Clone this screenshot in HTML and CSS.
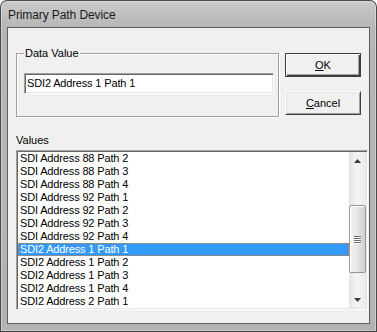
FILE: index.html
```html
<!DOCTYPE html>
<html lang="en">
<head>
    <meta charset="UTF-8">
    <title>Primary Path Device</title>
    <link rel="stylesheet" href="styles.css">
</head>
<body>
    <div class="window">
        <div class="titlebar">Primary Path Device</div>

        <div class="client">
            <div class="top-row">
                <div class="groupbox">
                    <span class="group-label">Data Value</span>
                    <div class="textbox">SDI2 Address 1 Path 1</div>
                </div>
                <div class="buttons">
                    <button class="btn default"><u>O</u>K</button>
                    <button class="btn"><u>C</u>ancel</button>
                </div>
            </div>

            <div class="list-label">Values</div>
            <div class="listbox">
                <ul class="items">
                    <li>SDI Address 88 Path 2</li>
                    <li>SDI Address 88 Path 3</li>
                    <li>SDI Address 88 Path 4</li>
                    <li>SDI Address 92 Path 1</li>
                    <li>SDI Address 92 Path 2</li>
                    <li>SDI Address 92 Path 3</li>
                    <li>SDI Address 92 Path 4</li>
                    <li class="selected">SDI2 Address 1 Path 1</li>
                    <li>SDI2 Address 1 Path 2</li>
                    <li>SDI2 Address 1 Path 3</li>
                    <li>SDI2 Address 1 Path 4</li>
                    <li>SDI2 Address 2 Path 1</li>
                </ul>
                <div class="scrollbar">
                    <div class="sb-btn">
                        <svg width="7" height="4" viewBox="0 0 7 4"><polygon points="3.5,0 7,4 0,4" fill="#3a3a3a"/></svg>
                    </div>
                    <div class="sb-gap"></div>
                    <div class="sb-thumb">
                        <span></span><span></span><span></span><span></span>
                    </div>
                    <div class="sb-rest"></div>
                    <div class="sb-btn">
                        <svg width="7" height="4" viewBox="0 0 7 4"><polygon points="0,0 7,0 3.5,4" fill="#3a3a3a"/></svg>
                    </div>
                </div>
            </div>
        </div>
    </div>
</body>
</html>
```

FILE: styles.css
```css
/* Reset */
* {
    margin: 0;
    padding: 0;
    box-sizing: border-box;
}

body {
    font-family: "Liberation Sans", Arial, sans-serif;
    font-size: 11px;
    line-height: 13px;
    color: #000;
    background: #fff;
}

/* Window frame */
.window {
    width: 377px;
    height: 332px;
    border: 1px solid #4a4a4a;
    border-bottom-color: #3a3a3a;
    border-radius: 7px 7px 0 0;
    background: linear-gradient(to bottom, #cacaca 0, #b6b6b6 27px, #b2b2b2 100%);
    box-shadow: inset 0 0 0 1px rgba(255, 255, 255, 0.35);
    display: flex;
    flex-direction: column;
}

.titlebar {
    height: 26px;
    padding: 2px 0 0 7px;
    line-height: 24px;
    font-size: 12px;
    letter-spacing: -0.1px;
    color: #1a1a1a;
}

.client {
    flex: 1;
    margin: 0 6px 7px 6px;
    border: 1px solid #5c5c5c;
    background: #f0f0f0;
    padding: 25px 0 0 8px;
}

/* Top area */
.top-row {
    display: flex;
    align-items: flex-start;
}

.groupbox {
    position: relative;
    width: 263px;
    height: 64px;
    border: 1px solid #a0a0a0;
    box-shadow: inset 1px 1px 0 #fff, 1px 1px 0 #fff;
    padding: 19px 0 0 7px;
}

.group-label {
    position: absolute;
    top: -7px;
    left: 7px;
    padding: 0 1px;
    background: #f0f0f0;
}

.textbox {
    width: 250px;
    height: 21px;
    background: #fff;
    border: 1px solid;
    border-color: #a0a0a0 #fff #fff #a0a0a0;
    box-shadow: inset 1px 1px 0 #696969, inset -1px -1px 0 #e3e3e3;
    padding: 3px 0 0 2px;
    line-height: 13px;
    letter-spacing: -0.15px;
}

.buttons {
    display: flex;
    flex-direction: column;
    gap: 14px;
    margin-left: 6px;
}

.btn {
    width: 76px;
    height: 24px;
    font-family: inherit;
    font-size: 11px;
    color: #000;
    background: #f0f0f0;
    border: 1px solid;
    border-color: #fff #404040 #404040 #fff;
    box-shadow: inset 1px 1px 0 #e3e3e3, inset -1px -1px 0 #a0a0a0;
}

.btn.default {
    border-color: #3c3c3c;
    box-shadow: inset 1px 1px 0 #fff, inset -1px -1px 0 #404040, inset -2px -2px 0 #a0a0a0;
}

.btn u {
    text-decoration: underline;
}

/* Values list */
.list-label {
    margin-top: 17px;
}

.listbox {
    display: flex;
    width: 352px;
    height: 160px;
    margin-top: 3px;
    background: #fff;
    border: 1px solid;
    border-color: #a0a0a0 #fff #fff #a0a0a0;
    box-shadow: inset 1px 1px 0 #696969, inset -1px -1px 0 #e3e3e3;
    padding: 1px;
}

.items {
    flex: 1;
    list-style: none;
}

.items li {
    height: 13px;
    padding-left: 2px;
    white-space: nowrap;
    letter-spacing: -0.15px;
}

.items li.selected {
    background: #3399ff;
    color: #fff;
    outline: 1px dotted #d9822b;
    outline-offset: -1px;
}

/* Scrollbar */
.scrollbar {
    width: 17px;
    display: flex;
    flex-direction: column;
    background: linear-gradient(to right, #e4e4e4, #f4f4f4 45%, #ececec);
}

.sb-btn {
    height: 17px;
    display: flex;
    align-items: center;
    justify-content: center;
}

.sb-gap {
    height: 36px;
}

.sb-thumb {
    height: 68px;
    border: 1px solid #979797;
    border-radius: 2px;
    background: linear-gradient(to right, #f4f4f4, #e6e6e6 50%, #cfcfcf);
    box-shadow: inset 1px 1px 0 #fff;
    display: flex;
    flex-direction: column;
    align-items: center;
    justify-content: center;
    gap: 1px;
}

.sb-thumb span {
    display: block;
    width: 7px;
    height: 1px;
    background: #6e6e6e;
    box-shadow: 0 1px 0 #fff;
}

.sb-rest {
    flex: 1;
}
```
